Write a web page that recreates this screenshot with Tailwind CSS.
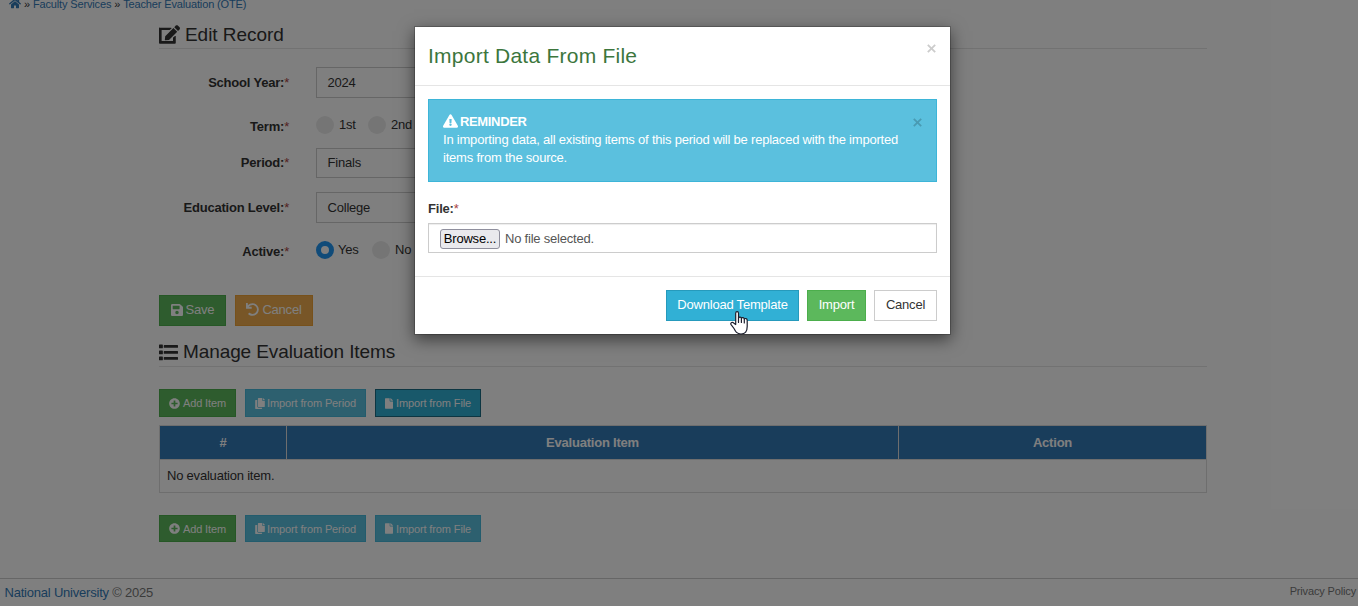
<!DOCTYPE html>
<html lang="en">
<head>
  <meta charset="UTF-8">
  <title>Teacher Evaluation (OTE)</title>
  <script src="https://cdn.jsdelivr.net/npm/@tailwindcss/browser@4"></script>
</head>
<body class="relative h-[606px] overflow-hidden bg-white font-['Liberation_Sans',Arial,sans-serif] text-[13px] leading-[18px] tracking-[-0.21px] text-[#333]">
  <svg class="hidden">
    <symbol id="home" viewBox="0 0 576 512"><path d="M280.37 148.26L96 300.11V464a16 16 0 0 0 16 16l112.06-.29a16 16 0 0 0 15.92-16V368a16 16 0 0 1 16-16h64a16 16 0 0 1 16 16v95.64a16 16 0 0 0 16 16.05L464 480a16 16 0 0 0 16-16V300L295.67 148.26a12.19 12.19 0 0 0-15.3 0zM571.6 251.47L488 182.56V44.05a12 12 0 0 0-12-12h-56a12 12 0 0 0-12 12v72.61L318.47 43a48 48 0 0 0-61 0L4.34 251.47a12 12 0 0 0-1.6 16.9l25.5 31A12 12 0 0 0 45.15 301l235.22-193.74a12.19 12.19 0 0 1 15.3 0L530.9 301a12 12 0 0 0 16.9-1.6l25.5-31a12 12 0 0 0-1.7-16.93z"/></symbol>
    <symbol id="edit" viewBox="0 0 576 512"><path d="M402.6 83.2l90.2 90.2c3.8 3.8 3.8 10 0 13.8L274.4 405.6l-92.8 10.3c-12.4 1.4-22.9-9.1-21.5-21.5l10.3-92.8L388.8 83.2c3.8-3.8 10-3.8 13.8 0zm162-22.9l-48.8-48.8c-15.2-15.2-39.9-15.2-55.2 0l-35.4 35.4c-3.8 3.8-3.8 10 0 13.8l90.2 90.2c3.8 3.8 10 3.8 13.8 0l35.4-35.4c15.2-15.3 15.2-40 0-55.2zM384 346.2V436H72V132h221.800c3.200 0 6.200-1.300 8.500-3.500l40-40c7.600-7.600 2.200-20.500-8.500-20.500H30C12 64 0 78 0 94v386c0 18 12 32 30 32h400c18 0 30-14 30-32V306.200c0-10.700-12.900-16-20.500-8.500l-52 40c-2.200 2.300-3.500 5.300-3.500 8.500z"/></symbol>
    <symbol id="save" viewBox="0 0 448 512"><path d="M433.941 129.941l-83.882-83.882A48 48 0 0 0 316.118 32H48C21.49 32 0 53.49 0 80v352c0 26.51 21.49 48 48 48h352c26.51 0 48-21.49 48-48V163.882a48 48 0 0 0-14.059-33.941zM224 416c-35.346 0-64-28.654-64-64 0-35.346 28.654-64 64-64s64 28.654 64 64c0 35.346-28.654 64-64 64zm96-304.52V212c0 6.627-5.373 12-12 12H76c-6.627 0-12-5.373-12-12V108c0-6.627 5.373-12 12-12h228.52c3.183 0 6.235 1.264 8.485 3.515l3.48 3.48A11.996 11.996 0 0 1 320 111.48z"/></symbol>
    <symbol id="undo" viewBox="0 0 512 512"><path d="M212.333 224.333H12c-6.627 0-12-5.373-12-12V12C0 5.373 5.373 0 12 0h48c6.627 0 12 5.373 12 12v78.112C117.773 39.279 184.26 7.47 258.175 8.007c136.906.994 246.448 111.623 246.157 248.532C504.041 393.258 393.12 504 256.333 504c-64.089 0-122.496-24.313-166.51-64.215-5.099-4.622-5.334-12.554-.467-17.42l33.967-33.967c4.474-4.474 11.662-4.717 16.401-.525C170.76 415.336 211.58 432 256.333 432c97.268 0 176-78.716 176-176 0-97.267-78.716-176-176-176-58.496 0-110.28 28.476-142.274 72.333h98.274c6.627 0 12 5.373 12 12v48c0 6.627-5.373 12-12 12z"/></symbol>
    <symbol id="list" viewBox="0 0 512 512"><path d="M16 40h72a16 16 0 0 1 16 16v72a16 16 0 0 1-16 16H16a16 16 0 0 1-16-16V56a16 16 0 0 1 16-16zm0 160h72a16 16 0 0 1 16 16v72a16 16 0 0 1-16 16H16a16 16 0 0 1-16-16v-72a16 16 0 0 1 16-16zm0 164h72a16 16 0 0 1 16 16v72a16 16 0 0 1-16 16H16a16 16 0 0 1-16-16v-72a16 16 0 0 1 16-16zM144 56h352a16 16 0 0 1 16 16v42a16 16 0 0 1-16 16H144a16 16 0 0 1-16-16V72a16 16 0 0 1 16-16zm0 160h352a16 16 0 0 1 16 16v42a16 16 0 0 1-16 16H144a16 16 0 0 1-16-16v-42a16 16 0 0 1 16-16zm0 162h352a16 16 0 0 1 16 16v42a16 16 0 0 1-16 16H144a16 16 0 0 1-16-16v-42a16 16 0 0 1 16-16z"/></symbol>
    <symbol id="plus" viewBox="0 0 512 512"><path d="M256 8C119 8 8 119 8 256s111 248 248 248 248-111 248-248S393 8 256 8zm144 276c0 6.6-5.4 12-12 12h-92v92c0 6.6-5.4 12-12 12h-56c-6.6 0-12-5.4-12-12v-92h-92c-6.6 0-12-5.4-12-12v-56c0-6.6 5.4-12 12-12h92v-92c0-6.6 5.4-12 12-12h56c6.6 0 12 5.4 12 12v92h92c6.6 0 12 5.4 12 12v56z"/></symbol>
    <symbol id="copy" viewBox="0 0 448 512"><path d="M320 448v40c0 13.255-10.745 24-24 24H24c-13.255 0-24-10.745-24-24V120c0-13.255 10.745-24 24-24h72v296c0 30.879 25.121 56 56 56h168zm0-344V0H152c-13.255 0-24 10.745-24 24v368c0 13.255 10.745 24 24 24h272c13.255 0 24-10.745 24-24V128H344c-13.2 0-24-10.8-24-24zm120.971-31.029L375.029 7.029A24 24 0 0 0 358.059 0H352v96h96v-6.059a24 24 0 0 0-7.029-16.97z"/></symbol>
    <symbol id="file" viewBox="0 0 384 512"><path d="M224 136V0H24C10.7 0 0 10.7 0 24v464c0 13.3 10.7 24 24 24h336c13.3 0 24-10.7 24-24V160H248c-13.2 0-24-10.8-24-24zm160-14.1v6.1H256V0h6.1c6.4 0 12.5 2.5 17 7l97.9 98c4.5 4.5 7 10.6 7 16.9z"/></symbol>
    <symbol id="warning" viewBox="0 0 576 512"><path d="M569.517 440.013C587.975 472.007 564.806 512 527.94 512H48.054c-36.937 0-59.999-40.055-41.577-71.987L246.423 23.985c18.467-32.009 64.72-31.951 83.154 0l239.94 416.028zM288 354c-25.405 0-46 20.595-46 46s20.595 46 46 46 46-20.595 46-46-20.595-46-46-46zm-43.673-165.346l7.418 136c.347 6.364 5.609 11.346 11.982 11.346h48.546c6.373 0 11.635-4.982 11.982-11.346l7.418-136c.375-6.874-5.098-12.654-11.982-12.654h-63.383c-6.884 0-12.356 5.78-11.981 12.654z"/></symbol>
    <symbol id="times" viewBox="0 0 10 10"><path d="M1.6 .2L5 3.600 8.400 .2 9.800 1.600 6.400 5 9.800 8.400 8.400 9.800 5 6.400 1.600 9.800 .2 8.400 3.600 5 .2 1.600z"/></symbol>
  </svg>

  <!-- Page -->
  <div class="flex h-full flex-col">
    <nav class="flex h-[10px] items-end gap-[3px] pl-[9px] text-[11px] leading-[12px] tracking-[-0.15px] whitespace-nowrap text-[#337ab7]">
      <svg class="mb-px h-[11px] w-[12px] fill-current"><use href="#home"/></svg>
      <span class="text-[#333]">»</span>
      <a href="#">Faculty Services</a>
      <span class="text-[#333]">»</span>
      <a href="#">Teacher Evaluation (OTE)</a>
    </nav>

    <main class="ml-[159px] w-[1048px] grow">
      <h3 class="flex h-[39px] items-center gap-[5px] border-b border-[#e5e5e5] pt-[12px] text-[19px] tracking-[-0.05px]">
        <svg class="mb-px h-[19px] w-[21px] fill-current"><use href="#edit"/></svg>
        <span>Edit Record</span>
      </h3>

      <form class="pt-[18px]">
        <div class="flex h-[31px] items-center">
          <label class="w-[130px] text-right font-bold">School Year:<span class="font-normal text-[#a94442]">*</span></label>
          <div class="ml-[27px] flex h-[31px] w-[400px] items-center border border-[#ccc] pl-[10.5px]">2024</div>
        </div>
        <div class="mt-[17px] flex h-[20px] items-center">
          <label class="w-[130px] pt-[4px] text-right font-bold">Term:<span class="font-normal text-[#a94442]">*</span></label>
          <span class="ml-[27px] size-[18px] rounded-full bg-[#ebebeb]"></span>
          <span class="w-[29px] pl-[5px]">1st</span>
          <span class="ml-[5px] size-[18px] rounded-full bg-[#ebebeb]"></span>
          <span class="pl-[5px]">2nd</span>
        </div>
        <div class="mt-[13px] flex h-[30px] items-center">
          <label class="w-[130px] text-right font-bold">Period:<span class="font-normal text-[#a94442]">*</span></label>
          <div class="ml-[27px] flex h-[30px] w-[400px] items-center border border-[#ccc] pl-[10.5px]">Finals</div>
        </div>
        <div class="mt-[14px] flex h-[31px] items-center">
          <label class="w-[130px] text-right font-bold">Education Level:<span class="font-normal text-[#a94442]">*</span></label>
          <div class="ml-[27px] flex h-[31px] w-[400px] items-center border border-[#ccc] pl-[10.5px]">College</div>
        </div>
        <div class="mt-[17px] flex h-[20px] items-center">
          <label class="w-[130px] pt-[4px] text-right font-bold">Active:<span class="font-normal text-[#a94442]">*</span></label>
          <span class="ml-[27px] size-[18px] rounded-full border-[5px] border-[#2196f3] bg-white"></span>
          <span class="w-[33px] pl-[4px]">Yes</span>
          <span class="ml-[5px] size-[18px] rounded-full bg-[#ebebeb]"></span>
          <span class="pl-[5px]">No</span>
        </div>
        <div class="mt-[35px] flex gap-[9px] text-white">
          <button type="button" class="flex h-[31px] w-[67px] items-center justify-center gap-[3px] border border-[#4cae4c] bg-[#5cb85c] pb-[2px]"><svg class="h-[14px] w-[12px] fill-current"><use href="#save"/></svg>Save</button>
          <button type="button" class="flex h-[31px] w-[78px] items-center justify-center gap-[3px] border border-[#eea236] bg-[#f0ad4e] pb-[2px]"><svg class="size-[13px] fill-current"><use href="#undo"/></svg>Cancel</button>
        </div>
      </form>

      <h3 class="flex h-[41px] items-center gap-[5px] border-b border-[#e5e5e5] pt-[12px] text-[19px] tracking-[-0.1px]">
        <svg class="size-[19px] fill-current"><use href="#list"/></svg>
        <span>Manage Evaluation Items</span>
      </h3>

      <div class="mt-[22px] flex gap-[9px] text-[11px] tracking-[-0.12px] text-white">
        <button class="flex h-[28px] w-[77px] items-center justify-center gap-[3px] border border-[#4cae4c] bg-[#5cb85c]"><svg class="size-[11px] fill-current"><use href="#plus"/></svg>Add Item</button>
        <button class="flex h-[28px] w-[121px] items-center justify-center gap-[2px] border border-[#46b8da] bg-[#5bc0de]"><svg class="h-[11px] w-[10px] fill-current"><use href="#copy"/></svg>Import from Period</button>
        <button class="flex h-[28px] w-[106px] items-center justify-center gap-[3px] border border-[#1b6d85] bg-[#31b0d5]"><svg class="h-[11px] w-[8px] fill-current"><use href="#file"/></svg>Import from File</button>
      </div>

      <table class="mt-[8px] w-[1048px] table-fixed border-collapse border border-[#ddd]">
        <thead>
          <tr class="h-[34px] bg-[#337ab7] text-white">
            <th class="w-[127px] border border-[#ddd]">#</th>
            <th class="w-[612px] border border-[#ddd]">Evaluation Item</th>
            <th class="border border-[#ddd]">Action</th>
          </tr>
        </thead>
        <tbody>
          <tr class="h-[33px]"><td colspan="3" class="border border-[#ddd] pl-[7px]">No evaluation item.</td></tr>
        </tbody>
      </table>

      <div class="mt-[22px] flex gap-[9px] text-[11px] tracking-[-0.12px] text-white">
        <button class="flex h-[27px] w-[77px] items-center justify-center gap-[3px] border border-[#4cae4c] bg-[#5cb85c]"><svg class="size-[11px] fill-current"><use href="#plus"/></svg>Add Item</button>
        <button class="flex h-[27px] w-[121px] items-center justify-center gap-[2px] border border-[#46b8da] bg-[#5bc0de]"><svg class="h-[11px] w-[10px] fill-current"><use href="#copy"/></svg>Import from Period</button>
        <button class="flex h-[27px] w-[106px] items-center justify-center gap-[3px] border border-[#46b8da] bg-[#5bc0de]"><svg class="h-[11px] w-[8px] fill-current"><use href="#file"/></svg>Import from File</button>
      </div>
    </main>

    <footer class="flex h-[28px] shrink-0 items-center justify-between border-t border-[#ccc] pr-[2px] pl-[4.5px] text-[#777]">
      <span><a href="#" class="text-[#337ab7]">National University</a> © 2025</span>
      <a href="#" class="pb-[3px] text-[11px] tracking-[-0.15px]">Privacy Policy</a>
    </footer>
  </div>

  <div class="absolute inset-0 bg-black/50"></div>

  <!-- Import dialog -->
  <div class="absolute top-[26px] left-[414px] flex h-[309px] w-[537px] flex-col border border-black/20 bg-white bg-clip-padding shadow-[0_5px_15px_rgba(0,0,0,0.5)]">
    <div class="flex h-[59px] justify-between border-b border-[#e5e5e5] pr-[14px] pl-[13px]">
      <h4 class="pt-[14px] text-[21px] leading-[30px] tracking-[0.24px] text-[#3c763d]">Import Data From File</h4>
      <svg class="mt-[17px] size-[9px] fill-[#ccc]"><use href="#times"/></svg>
    </div>
    <div class="h-[190px] px-[13px] pt-[13px]">
      <div class="flex h-[83px] justify-between border border-[#3db5d8] bg-[#5bc0de] pt-[13px] pr-[14px] pl-[14px] text-white">
        <div>
          <div class="flex items-center gap-[2px] font-bold tracking-[-0.35px]"><svg class="mb-[2px] h-[14px] w-[15px] fill-current"><use href="#warning"/></svg>REMINDER</div>
          <p class="w-[465px]">In importing data, all existing items of this period will be replaced with the imported items from the source.</p>
        </div>
        <svg class="mt-[5px] size-[9px] fill-[#499ab2]"><use href="#times"/></svg>
      </div>
      <label class="mt-[18px] block font-bold">File:<span class="font-normal text-[#a94442]">*</span></label>
      <div class="mt-[5px] flex h-[30px] items-center gap-[5px] border border-[#ccc] pt-[2px] pl-[11px] text-[#555] shadow-[inset_0_1px_1px_rgba(0,0,0,0.075)]">
        <span class="flex h-[20px] w-[60px] items-center justify-center rounded-[3px] border border-[#8f8f9d] bg-[#e9e9ed] text-black">Browse...</span>
        <span>No file selected.</span>
      </div>
    </div>
    <div class="flex grow justify-end gap-[8px] border-t border-[#e5e5e5] pt-[13px] pr-[13px]">
      <button class="h-[31px] w-[133px] border border-[#269abc] bg-[#31b0d5] pb-[2px] text-white">Download Template</button>
      <button class="h-[31px] w-[59px] border border-[#4cae4c] bg-[#5cb85c] pb-[2px] text-white">Import</button>
      <button class="h-[31px] w-[63px] border border-[#ccc] bg-white pb-[2px]">Cancel</button>
    </div>
  </div>

  <!-- Pointer -->
  <svg class="absolute top-[311px] left-[730px] h-[24px] w-[19px]" viewBox="0 0 19 24" fill="#fff" stroke="#1c1f2e" stroke-width="1.2" stroke-linejoin="round" stroke-linecap="round">
    <path d="M5.7 13.5V2.2C5.7.2 8.5.2 8.5 2.2V7C9 5.6 11.3 5.9 11.4 7.3C12 6.2 14.2 6.5 14.3 8C15 7.1 17.2 7.5 17.2 9.2V15.5C17.2 20.5 15.2 23 11 23C6.8 23 5.5 20.5 4 17.5L.9 13.3C.3 11.5 2.7 10.8 3.6 12Z"/>
    <path fill="none" d="M8.5 7V11.5M11.4 7.5V11.5M14.3 8.2V12"/>
  </svg>
</body>
</html>
